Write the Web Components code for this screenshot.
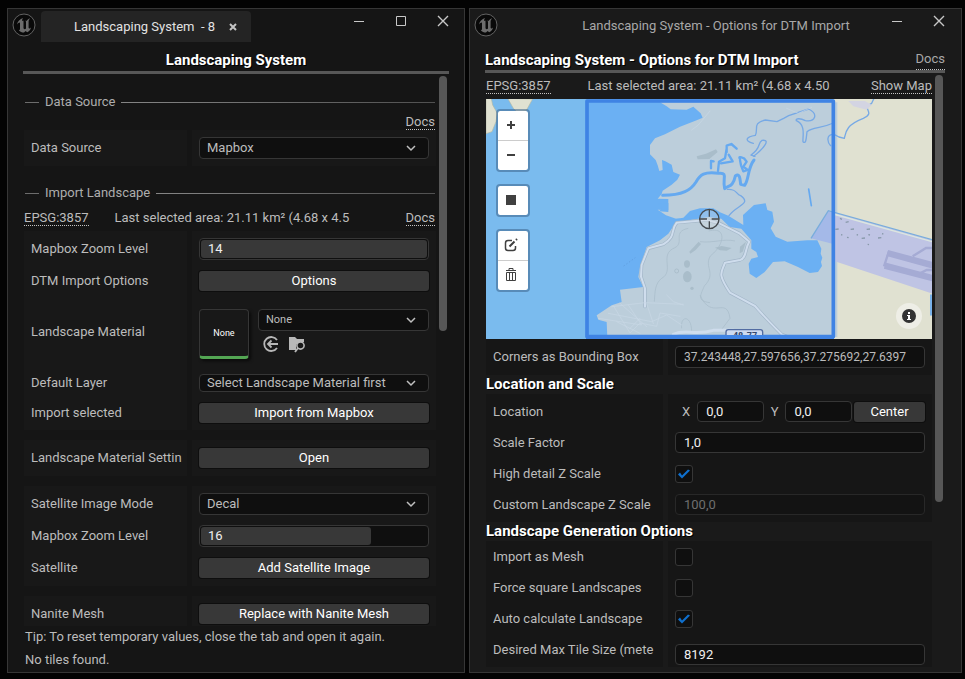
<!DOCTYPE html>
<html lang="en">
<head>
<meta charset="utf-8">
<title>Landscaping System</title>
<style>
html{height:100%;background:#030303}
body{box-sizing:border-box;min-height:100%;margin:0;padding:8px 3px 6px 7px;display:grid;grid-template-columns:458fr 493fr;gap:4px;font:13px/16px Roboto,"Liberation Sans",sans-serif;color:#bcbcbc}
</style>
</head>
<body>
<landscaping-panel></landscaping-panel>
<dtm-options-panel></dtm-options-panel>
<script>
const controls = `
*{box-sizing:border-box}
button,input,select{font:inherit;color:inherit;margin:0}
a{color:inherit;text-decoration:none;border-bottom:1px dotted #c4c4c4;line-height:14px;white-space:nowrap}
h1{margin:0;font-size:15px;line-height:20px;font-weight:700;color:#fff;text-shadow:1px 1px 0 #000;white-space:nowrap}
h2{margin:0;height:19px;font-size:15px;line-height:19px;font-weight:700;color:#fff;text-shadow:1px 1px 0 #000}
label{white-space:nowrap}
.btn{width:100%;height:20px;padding:0;border:0;border-radius:3px;background:#383838;color:#fff;box-shadow:0 0 0 1px #0e0e0e}
.field{width:100%;min-width:0;height:22px;padding:0 8px;border:1px solid #363636;border-radius:4px;background:#0f0f0f;color:#f0f0f0;outline:0}
.field:disabled{background:#131313;border-color:#282828;color:#6f6f6f}
.field.dim{color:#bcbcbc}
spin-slider input{color:#f0f0f0}
input[type=checkbox]{appearance:none;display:block;width:18px;height:18px;border:1px solid #363636;border-radius:3px;background:#0f0f0f}
input[type=checkbox]:checked::before{content:"";display:block;width:16px;height:16px;background:#0f70cf;clip-path:polygon(2px 9px,4px 7px,6px 10px,12px 4px,14px 5px,6px 13px)}
.info{display:flex;align-items:center}
.info span{flex:1;min-width:0;overflow:hidden;white-space:nowrap}
svg{display:block}
`;
const define = (name, html) => customElements.define(name, class extends HTMLElement {
  constructor() {
    super();
    this.attachShadow({ mode: 'open' }).innerHTML = html;
  }
});

define('engine-logo', `<style>:host{display:block;width:24px;height:24px}svg{display:block}</style>
<svg width="24" height="24" viewBox="0 0 24 24"><circle cx="12" cy="12" r="11" fill="#090909" stroke="#626262"/>
<path fill="#6c6c6c" d="M11 5C8 6 5.500 8.500 5 11.500c1-1.500 2-2.200 2.500-2 .4.100.5.500.5 1V16c0 .8-.3 1.200-1.200 1.200C8 18.700 10 19.500 12 19.500l1.600-1.500 1.600 1.300c1.800-.8 3.300-2.400 3.800-4.800-.8.900-1.500 1.200-1.900 1-.4-.1-.5-.4-.5-.9V8.500c0-1.200.8-2.400 1.600-3.200-1.900.6-3 1.600-3.700 2.700-.4-.3-.9-.3-1.300-.3.6.4.8.8.8 1.400v6.300c-.4.500-.9.800-1.300.8-.7 0-1.200-.5-1.200-1.400V8.500c0-1.500-.5-1-1.500-.5C10 7 10.300 6 11 5z"/></svg>`);

define('editor-window', `<style>
:host{display:flex;flex-direction:column;min-height:100%;box-sizing:border-box;border:1px solid #363636;background:var(--win,#151515)}
header{display:grid;grid-template-columns:auto 1fr auto;align-items:start;height:36px;padding:2px 15px 0 4px;box-sizing:border-box}
:host([fixed]) header{padding-right:16px}
engine-logo{margin-top:2px}
nav{display:flex;gap:30px;padding-top:4px}
button{appearance:none;border:0;padding:0;background:none;color:#c8c8c8;width:12px;height:12px}
svg{display:block}
.main{flex:1;display:flex;flex-direction:column}
:host([fixed]) .max{display:none}
</style>
<header><engine-logo></engine-logo><slot name="title"></slot><nav>
<button aria-label="Minimize"><svg width="12" height="12" viewBox="0 0 12 12"><path d="M1 6.500h10" stroke="currentColor"/></svg></button>
<button class="max" aria-label="Maximize"><svg width="12" height="12" viewBox="0 0 12 12"><path d="M1.500 1.500h9v9h-9z" fill="none" stroke="currentColor"/></svg></button>
<button aria-label="Close"><svg width="12" height="12" viewBox="0 0 12 12"><path d="M1 1l10 10M11 1L1 11" stroke="currentColor" stroke-width="1.400"/></svg></button>
</nav></header><div class="main"><slot></slot></div>`);

define('section-title', `<style>:host{display:grid;grid-template-columns:14px auto 1fr;align-items:center;gap:6px;height:16px;padding:0 1px;color:#adadad}
i{height:1px;background:#6c6c6c}i:last-child{background:linear-gradient(90deg,#858585,#505050)}</style><i></i><slot></slot><i></i>`);

define('prop-group', `<style>:host{display:block;padding:2px 0;box-sizing:border-box;background:linear-gradient(90deg,var(--cell) var(--split),var(--line) var(--split),var(--line) calc(var(--split) + 5px),var(--cell) calc(var(--split) + 5px))}</style><slot></slot>`);

define('prop-row', `<style>:host{display:grid;grid-template-columns:calc(var(--split) - 7px) minmax(0,1fr);column-gap:12px;height:32px;align-items:center;padding:0 7px;box-sizing:border-box}
.l{overflow:hidden;min-width:0;display:flex}</style><div class="l"><slot name="label"></slot></div><slot></slot>`);

define('combo-box', `<style>:host{display:grid;height:22px;min-width:0}
::slotted(select){grid-area:1/1;appearance:none;width:100%;height:100%;padding:0 7px;border:1px solid #363636;border-radius:4px;background:#0f0f0f;outline:0}
svg{grid-area:1/1;justify-self:end;align-self:center;margin-right:12px;pointer-events:none}</style><slot></slot>
<svg width="12" height="8" viewBox="0 0 12 8"><path d="M2 2l4 4 4-4" fill="none" stroke="#c0c0c0" stroke-width="1.500"/></svg>`);

define('spin-slider', `<style>:host{display:grid;height:22px;border:1px solid #363636;border-radius:4px;background:#0f0f0f;box-sizing:border-box;padding:1px}
i{grid-area:1/1;width:var(--fill,100%);border-radius:3px;background:#383838}
::slotted(input){grid-area:1/1;min-width:0;border:0;background:none;padding:0 7px;outline:0}</style><i></i><slot></slot>`);

define('scroll-thumb', `<style>:host{display:block;width:8px;border-radius:4px;background:#575757}</style>`);

define('terrain-map', `<style>
*{box-sizing:border-box}
:host{display:block;position:relative;height:240px;overflow:hidden;background:#7abbee}
svg{display:block}
.map{width:100%;height:100%}
.tools{position:absolute;left:10px;top:10px;display:grid;gap:12px}
.bar{border:2px solid rgba(60,100,140,.55);border-radius:4px;background:#fff;background-clip:padding-box;width:34px;display:grid}
button{appearance:none;border:0;padding:0;margin:0;background:none;height:29px;display:grid;place-items:center;color:#404040}
.bar button{padding:0 4px 2px 0}
button+button{border-top:1px solid #ccc;height:30px}
.i{position:absolute;right:10px;bottom:10px;width:26px;height:26px;border-radius:13px;background:#eeeee6}
</style>
<svg class="map" viewBox="0 0 446 240" preserveAspectRatio="xMidYMid slice">
<rect width="446" height="240" fill="#7abbee"/>
<g transform="translate(-6 -4) scale(.33333)">
<g fill="#e0e1d1" stroke="#b1b8a4" stroke-width="2"><path d="M10 10H34L38 30 52 55 48 80 36 110 18 116V10zM83 10 100 40 112 52 138 48 158 12z"/></g>
<path d="M1060 0h300v740h-300z" fill="#e0e1d1"/>
<path d="M320 14h742v722H320z" fill="#6bb0f3"/>
<path fill="#bccedb" d="M540 22l20 12 12 9 48 1 20-9 22 20 6 13-18 8-50 19-45 23-30 12-15 20v28l17 17 6 16 5 17 10-3-2-30 10 4 19 10 5 22 20 8-8 15-17 15-27 18-3 10-12 14 32 1v34l-32-2 25 17 30 10h12l-12 15-13 15-10 15-25 20-40 20-10 30-10 30-5 30 15 30-70 8 5 37-30 10-45 30 5 13 25 7 2 45h690V22z"/>
<path fill="#6bb0f3" d="M580 373l30-5 20-20 30-8h40l20 12 25 10 45 28-1-30 33-30 35-5 5 20 15 5 5 30-10 20 15 25 35 15 60-4h30l12 25-2 15 5 12-4 13 3 12-12 18-25 3-35-18-40-17-35 2-25 30-25 18-20-13-3-30 8-15 20-5-5-15-15-10v-25l-30-35-35-5-25-25-38-5-50 8-40 10-10 8z"/>
<path fill="#6bb0f3" d="M535 326l30-2v27l-28-2 10-9z"/>
<g fill="none" stroke="#a8bbc9" stroke-width="2"><path d="M625 400c-50 10-10 42-40 58-50 20 0 70-40 92-20 15-20 40-22 70M686 408c55-15 50 40 5 75-20 35 20 50-18 90-10 25-25 45 17 50M660 440c40 5 70-10 105-2M660 600c35 80 80 0 90 70l-30 40M605 700c-5-40 30-40 30 10"/></g>
<g fill="#a9bdca"><path d="M628 470l28-30 7 7-16 18-16 11zM650 184l28-8 30-13 5 8-25 21-35 1zM705 458l20-5 30 6-15 8-20-1zM780 455l18-15-10 30-9 5z"/><ellipse cx="621" cy="507" rx="9" ry="11"/><ellipse cx="622" cy="545" rx="13" ry="17"/><circle cx="636" cy="580" r="5"/></g><circle cx="590" cy="528" r="6" fill="none" stroke="#a3b6c4" stroke-width="2"/>
<g fill="none" stroke="#65a9f0" stroke-linejoin="round" stroke-linecap="round">
<path stroke-width="9" d="M548 301c60 0 85-16 100-40 12-22 25-32 68-26 30-3 10 15 18 46 10-10 25-3 32-38 12-10 14 5 16 25l12 3c14-20 8-50 28-76"/>
<path stroke-width="7" d="M740 172v-20l14-5 16 14M740 160l-5 30-18 10-3 28M723 205l35-6-12-20M780 192c-6-9 4-5 12-2l8 10-10 15 13 10-13 4-7-18-3-15M693 220v-22l8 1"/>
<g stroke-width="4" stroke="#77a9e5"><path d="M742 283c30-2 25 15 40 19 35 25-15 30-35 60M821 184c25-20 55-52 25-48-15 10 0 20-33 44l12 4M820 145c-30-8-20-20 6-24 10-20-10-36 30-46l35 5 20-10 15-8 60-20c30 15 20 40-10 35-15-8-30-7-27 0 30 12 18 50 20 63 10 10 10-15 12-30 20-15 40-8 79-26M1052 152c-10-10-15-35 10-34l15 8 16 4c5-20 5-40 57-60 40-18-10-30 25-45l7-15h50"/></g>
<path stroke-width="5" d="M986 282l8 50M1353 600v60"/></g>
<path d="M1105 18h50l20 12-15 14-40-10z" fill="#d3d4e2"/>
<path d="M993 430l52-83 315 88v162L1060 497v-54z" fill="#bfc4e4"/>
<path d="M993 430l52-83 15 3v97z" fill="#a4b9e8"/>
<path d="M993 430l52-83 315 88" fill="none" stroke="#79addc" stroke-width="4"/><path d="M1060 357l300 84" stroke="#dce7df" stroke-width="4"/>
<g fill="none" stroke="#a5abd4"><path stroke-width="19" d="M1222 474l140 38M1214 512l146 38"/><path stroke-width="7" d="M1227 468l-15 46M1298 484l40-25h22M1320 535l20-10h20"/></g>
<path d="M1080 370l6 3M1097 382l9-2M1066 403l10-1M1112 403l10-1M1160 403l10-1M1083 419l4 1M1101 427l5 1M1130 419l4 1M1145 430l10-1M1165 419l5 1M1194 429l10-1M1206 416l4 1M1163 448l4 1" stroke="#8899aa" stroke-width="4"/>
<g fill="none" stroke-linejoin="round" stroke-linecap="round"><path d="M1005 760L905 718c-35-35-50-50-80-85l-75-40c-40-60-25-60-15-90l45-8c20-5 15-35 28-55l-30-25-60-30-38-10-90 8c-20 25 0 40-40 65l-45 12-20 50-2 35 12 35v55" stroke="#a3b6c8" stroke-width="10"/><path d="M1005 760L905 718c-35-35-50-50-80-85l-75-40c-40-60-25-60-15-90l45-8c20-5 15-35 28-55l-30-25-60-30-38-10-90 8c-20 25 0 40-40 65l-45 12-20 50-2 35 12 35v55" stroke="#cfdded" stroke-width="6"/>
<path d="M580 718c40-18 60 5 120-12h60l50 10" stroke="#cfdded" stroke-width="9"/>
<g stroke="#c9d8e5" stroke-width="2"><path d="M395 635l100-12 115 5M385 655l130 25 45-20 45 30M400 632l50 82 30-30 50 10 10-40 60 10M420 625l80 70M355 670l130 20-40-60M560 600l20 20 30 10M410 680l70 35M500 626l20 60M635 105l20-15 35-42M920 40l35 15 40-18M480 670l-30 30"/></g></g>
<path d="M431 513l35-25" stroke="#5a94d4" stroke-width="2" stroke-dasharray="4 6"/>
<path d="M321 18h739v707H321z" fill="none" stroke="#3f83e4" stroke-width="11" stroke-linejoin="round"/>
<rect x="738" y="704" width="110" height="40" rx="7" fill="#cddaf0" stroke="#526ca2" stroke-width="4"/>
<circle cx="688" cy="372" r="29" fill="#d8dde0" fill-opacity=".35" stroke="#454a4e" stroke-width="4"/><path d="M688 343v22M688 379v22M659 372h22M695 372h22" stroke="#454a4e" stroke-width="4"/>
</g>
<text x="259" y="240" font-family="Roboto,sans-serif" font-weight="700" font-size="9" fill="#34486e" text-anchor="middle">48-77</text>
<path d="M100 238h248" stroke="#3f83e4" stroke-width="4"/>
</svg>
<div class="tools">
<div class="bar"><button aria-label="Zoom in"><svg width="10" height="10"><path d="M1 5h8M5 1v8" stroke="currentColor" stroke-width="2"/></svg></button><button aria-label="Zoom out"><svg width="10" height="10"><path d="M1 5h8" stroke="currentColor" stroke-width="2"/></svg></button></div>
<div class="bar"><button aria-label="Draw rectangle"><svg width="10" height="10"><path d="M0 0h10v10H0z" fill="currentColor"/></svg></button></div>
<div class="bar"><button aria-label="Edit"><svg width="14" height="14" viewBox="0 0 14 14" fill="none" stroke="currentColor" stroke-width="1.500"><path d="M8 2.500H4Q1.500 2.500 1.500 5v5Q1.500 12.500 4 12.500h5q2.500 0 2.500-2.500V8"/><path d="M5.500 8.500l5-5M12 2l1-1" stroke-width="2"/></svg></button><button aria-label="Delete"><svg width="12" height="14" viewBox="0 0 12 14" fill="none" stroke="currentColor"><path d="M1 2.500h10M4 2V.5h4V2M1.500 4.500h9v8h-9zM4.500 4v8M7.500 4v8"/></svg></button></div>
</div>
<button class="i" aria-label="Map information"><svg width="14" height="14" viewBox="0 0 14 14"><circle cx="7" cy="7" r="7" fill="#333"/><path d="M6 3h2v2H6zM5 6h3v4h1v1H5v-1h1V7H5z" fill="#fff"/></svg></button>`);

define('landscaping-panel', `<style>${controls}
:host{display:block;--cell:#181818;--line:#151515;--split:163px}
.tab{justify-self:start;display:flex;align-items:center;height:31px;width:210px;margin-left:5px;padding:0 14px 0 33px;border-radius:4px 4px 0 0;background:#242424;color:#e2e2e2;justify-content:space-between;white-space:pre}
.tab button{border:0;background:none;padding:0;width:8px;height:8px;color:#c4c4c4}
.head{margin:5px 15px 0;text-align:center;border-bottom:3px solid #575757;height:24px}
.body{display:grid;grid-template-columns:minmax(0,1fr) 8px;column-gap:3px;align-items:start;padding:0 17px 0 16px;height:552px;overflow:hidden}
.col{display:grid;padding-top:20px}
.docs{display:flex;justify-content:flex-end;height:20px;align-items:end;padding-right:1px}
.info{height:20px;margin-top:5px;align-items:end;padding-right:1px}.info span{margin-left:26px;flex:0 1 235px;height:16px}.info a:last-child{margin-left:auto}
scroll-thumb{height:255px;margin-top:2px}
prop-group+prop-group{margin-top:10px}
.asset{display:grid;grid-template-columns:50px minmax(0,1fr);column-gap:9px;align-self:end;padding-bottom:8px;align-items:start}
.thumb{height:50px;border:1px solid #363636;border-bottom:3px solid #53a653;border-radius:4px;display:grid;place-items:center;font-size:9px;line-height:12px;color:#fff;box-shadow:2px 2px 3px #0b0b0b}
.asset select{font-size:11px}
.icons{display:flex;gap:8px;padding:4px 0 0 4px}
.icons button{border:0;background:none;padding:0;width:18px;height:18px}
footer{padding:3px 17px 0;line-height:16px}p{margin:0 0 7px}p:last-child{margin:0}
</style>
<editor-window>
<div slot="title" class="tab"><span>Landscaping System  - 8</span><button aria-label="Close tab"><svg width="8" height="8" viewBox="0 0 8 8"><path d="M1 1l6 6M7 1L1 7" stroke="currentColor" stroke-width="2"/></svg></button></div>
<div class="head"><h1>Landscaping System</h1></div>
<div class="body"><div class="col">
<section-title>Data Source</section-title>
<div class="docs"><a href="#">Docs</a></div>
<prop-group><prop-row><label slot="label" for="src">Data Source</label><combo-box><select id="src"><option>Mapbox</option></select></combo-box></prop-row></prop-group>
<section-title style="margin-top:19px">Import Landscape</section-title>
<div class="info"><a href="#">EPSG:3857</a><span>Last selected area: 21.11 km² (4.68 x 4.5</span><a href="#">Docs</a></div>
<prop-group style="margin-top:5px">
<prop-row><label slot="label" for="z1">Mapbox Zoom Level</label><spin-slider><input id="z1" value="14"></spin-slider></prop-row>
<prop-row><label slot="label" for="opt">DTM Import Options</label><button id="opt" class="btn">Options</button></prop-row>
<prop-row style="height:70px"><label slot="label" for="mat">Landscape Material</label><div class="asset"><div class="thumb">None</div><div><combo-box><select id="mat"><option>None</option></select></combo-box><div class="icons">
<button aria-label="Use selected asset"><svg width="18" height="18" viewBox="0 0 18 18" fill="none" stroke="#b8b8b8" stroke-width="1.800"><path d="M15 5a7 7 0 1 0 0 8"/><path d="M16 9H6M9.500 5.500L6 9l3.500 3.500"/></svg></button>
<button aria-label="Browse to asset"><svg width="18" height="18" viewBox="0 0 18 18"><path d="M1 2h6l2 2h7v3H11l-3 3v5H1z" fill="#b8b8b8"/><circle cx="12.500" cy="10.500" r="3.600" fill="#181818" stroke="#b8b8b8" stroke-width="1.600"/><path d="M10 13l-3 4" stroke="#b8b8b8" stroke-width="1.800"/></svg></button></div></div></div></prop-row>
<prop-row style="height:31px"><label slot="label" for="lay">Default Layer</label><combo-box style="height:18px"><select id="lay"><option>Select Landscape Material first</option></select></combo-box></prop-row>
<prop-row style="height:30px"><label slot="label" for="imp">Import selected</label><button id="imp" class="btn">Import from Mapbox</button></prop-row>
</prop-group>
<prop-group><prop-row><label slot="label" for="set">Landscape Material Settin</label><button id="set" class="btn">Open</button></prop-row></prop-group>
<prop-group>
<prop-row><label slot="label" for="mode">Satellite Image Mode</label><combo-box><select id="mode"><option>Decal</option></select></combo-box></prop-row>
<prop-row><label slot="label" for="z2">Mapbox Zoom Level</label><spin-slider style="--fill:75%"><input id="z2" value="16"></spin-slider></prop-row>
<prop-row><label slot="label" for="sat">Satellite</label><button id="sat" class="btn">Add Satellite Image</button></prop-row>
</prop-group>
<prop-group><prop-row><label slot="label" for="nan">Nanite Mesh</label><button id="nan" class="btn">Replace with Nanite Mesh</button></prop-row></prop-group>
</div><scroll-thumb></scroll-thumb></div>
<footer><p>Tip: To reset temporary values, close the tab and open it again.</p><p>No tiles found.</p></footer>
</editor-window>`);

define('dtm-options-panel', `<style>${controls}
:host{display:block;--win:#1a1a1a;--cell:#161616;--line:#1a1a1a;--split:177px}
.title{text-align:center;color:#a8a8a8;padding:7px 0 0 43px}
.head{display:flex;justify-content:space-between;align-items:center;margin:4px 16px 0 15px;border-bottom:3px solid #575757;height:24px}
.head a{height:21px;padding-top:2px;align-self:start;color:#a8a8a8;line-height:16px}
.body{display:grid;grid-template-columns:minmax(0,1fr) 8px;column-gap:3px;align-items:start;padding:0 18px 0 16px}
.info{height:21px;align-items:end}.info span{margin-left:37px;flex:0 1 246px}.info a:last-child{margin-left:auto}
terrain-map{margin-top:5px}
scroll-thumb{height:427px;margin-top:2px}
prop-row{height:31px}
.field{height:21px}
.xy{display:grid;grid-template-columns:auto minmax(0,1fr) auto minmax(0,1fr) 66px;align-items:center;column-gap:7px;padding-left:7px}
.xy .btn{margin-left:-5px;width:auto}
.last{padding-top:0}
</style>
<editor-window fixed>
<div slot="title" class="title">Landscaping System - Options for DTM Import</div>
<div class="head"><h1>Landscaping System - Options for DTM Import</h1><a href="#">Docs</a></div>
<div class="body"><div>
<div class="info"><a href="#">EPSG:3857</a><span>Last selected area: 21.11 km² (4.68 x 4.50</span><a href="#">Show Map</a></div>
<terrain-map></terrain-map>
<prop-group><prop-row style="height:32px"><label slot="label" for="box">Corners as Bounding Box</label><input id="box" class="field dim" style="height:22px;font-size:12px" value="37.243448,27.597656,37.275692,27.6397"></prop-row></prop-group>
<h2>Location and Scale</h2>
<prop-group>
<prop-row><label slot="label" for="x">Location</label><div class="xy"><label for="x">X</label><input id="x" class="field" value="0,0"><label for="y">Y</label><input id="y" class="field" value="0,0"><button class="btn">Center</button></div></prop-row>
<prop-row><label slot="label" for="sf">Scale Factor</label><input id="sf" class="field" value="1,0"></prop-row>
<prop-row><label slot="label" for="hd">High detail Z Scale</label><input id="hd" type="checkbox" checked></prop-row>
<prop-row><label slot="label" for="cz">Custom Landscape Z Scale</label><input id="cz" class="field" value="100,0" disabled></prop-row>
</prop-group>
<h2>Landscape Generation Options</h2>
<prop-group class="last">
<prop-row><label slot="label" for="mesh">Import as Mesh</label><input id="mesh" type="checkbox"></prop-row>
<prop-row><label slot="label" for="sq">Force square Landscapes</label><input id="sq" type="checkbox"></prop-row>
<prop-row><label slot="label" for="auto">Auto calculate Landscape</label><input id="auto" type="checkbox" checked></prop-row>
<prop-row><label slot="label" for="tile">Desired Max Tile Size (mete</label><input id="tile" class="field" style="align-self:end" value="8192"></prop-row>
</prop-group>
</div><scroll-thumb></scroll-thumb></div>
</editor-window>`);
</script>
</body>
</html>
